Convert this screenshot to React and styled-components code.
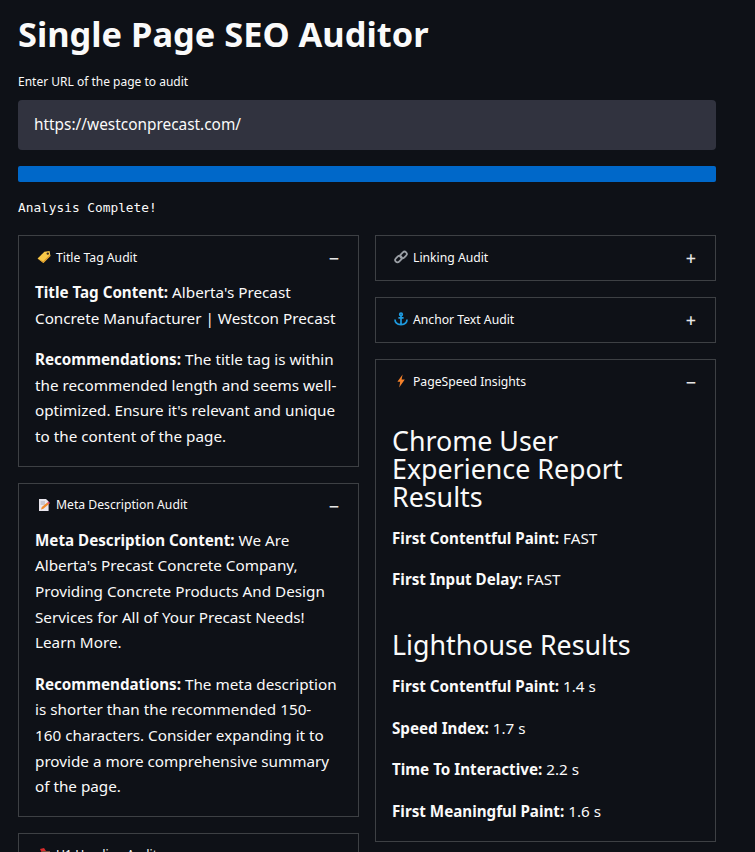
import styled, { createGlobalStyle } from "styled-components"

const GlobalStyle = createGlobalStyle`
    html, body {
        margin: 0;
        height: 852px;
        overflow: hidden;
        background-color: #0E1117;
    }

    * {
        box-sizing: border-box;
    }
`

function TagIcon() {
    return (
        <svg width="14" height="14" viewBox="0 0 14 14">
            <path d="M0.6 8.4 7.4 1.8 12.6 1 13.4 6 6.4 13Z" fill="#F7C948" />
            <path d="M0.6 8.4 6.4 13 13.4 6 13 4.8 6.2 11.2Z" fill="#D9992B" />
            <circle cx="10.8" cy="3.6" r="1.2" fill="#3B2A20" />
        </svg>
    )
}

function LinkIcon() {
    return (
        <svg width="14" height="14" viewBox="0 0 14 14" fill="none" stroke="#9A9FA5" strokeWidth="1.8">
            <rect x="0.8" y="6.8" width="7.4" height="4.6" rx="2.3" transform="rotate(-45 4.5 9.1)" />
            <rect x="5.8" y="2.6" width="7.4" height="4.6" rx="2.3" transform="rotate(-45 9.5 4.9)" />
        </svg>
    )
}

function AnchorIcon() {
    return (
        <svg width="14" height="14" viewBox="0 0 14 14" fill="none" stroke="#1E9BE0" strokeWidth="1.7">
            <circle cx="7" cy="2.4" r="1.3" />
            <path d="M7 3.6V12.6M4.4 5.8H9.6M1 7.4C1 10.6 3.6 12.4 7 12.6 10.4 12.4 13 10.6 13 7.4" />
        </svg>
    )
}

function BoltIcon() {
    return (
        <svg width="14" height="14" viewBox="0 0 14 14">
            <path d="M8.6 0.4 3.4 7.8H6.2L5.2 13.6 10.8 5.6H7.6Z" fill="#F4812A" />
        </svg>
    )
}

function MemoIcon() {
    return (
        <svg width="14" height="14" viewBox="0 0 14 14">
            <path d="M2 1H9L11.6 3.4V13H2Z" fill="#E9E6EE" />
            <path d="M3.6 4H8M3.6 6H8" stroke="#A8A6B4" strokeWidth="1" />
            <path d="M4 11.4 4.8 9 10.4 4.4 12 6 6.4 10.8Z" fill="#F08A2C" />
            <path d="M10.4 4.4 11.4 3.4 13 5 12 6Z" fill="#E8467C" />
        </svg>
    )
}

function PinIcon() {
    return (
        <svg width="14" height="14" viewBox="0 0 14 14">
            <path d="M3 1 7 0 9 3 5 5Z" fill="#D92B2B" />
            <path d="M5 3H13V5H5Z" fill="#7A5140" />
        </svg>
    )
}

function Expander({ icon, title, open, children }) {
    return (
        <ExpanderBox>
            <ExpanderHeader>
                <ExpanderTitle>
                    {icon}
                    <span>{title}</span>
                </ExpanderTitle>
                <Toggle>{open ? "−" : "+"}</Toggle>
            </ExpanderHeader>
            {children && <ExpanderBody>{children}</ExpanderBody>}
        </ExpanderBox>
    )
}

export default function App() {
    return (
        <Page>
            <GlobalStyle />
            <Title>Single Page SEO Auditor</Title>
            <Label>Enter URL of the page to audit</Label>
            <UrlField>https://westconprecast.com/</UrlField>
            <Progress />
            <Status>Analysis Complete!</Status>

            <Columns>
                <Column>
                    <Expander icon={<TagIcon />} title="Title Tag Audit" open>
                        <Text><b>Title Tag Content:</b> Alberta's Precast Concrete Manufacturer | Westcon Precast</Text>
                        <Text><b>Recommendations:</b> The title tag is within the recommended length and seems well-optimized. Ensure it's relevant and unique to the content of the page.</Text>
                    </Expander>
                    <Expander icon={<MemoIcon />} title="Meta Description Audit" open>
                        <Text><b>Meta Description Content:</b> We Are Alberta's Precast Concrete Company, Providing Concrete Products And Design Services for All of Your Precast Needs! Learn More.</Text>
                        <Text><b>Recommendations:</b> The meta description is shorter than the recommended 150-<br />160 characters. Consider expanding it to provide a more comprehensive summary of the page.</Text>
                    </Expander>
                    <Expander icon={<PinIcon />} title="H1 Heading Audit" open />
                </Column>

                <Column>
                    <Expander icon={<LinkIcon />} title="Linking Audit" />
                    <Expander icon={<AnchorIcon />} title="Anchor Text Audit" />
                    <Expander icon={<BoltIcon />} title="PageSpeed Insights" open>
                        <Heading>Chrome User Experience Report Results</Heading>
                        <Text><b>First Contentful Paint:</b> FAST</Text>
                        <Text><b>First Input Delay:</b> FAST</Text>
                        <Heading>Lighthouse Results</Heading>
                        <Text><b>First Contentful Paint:</b> 1.4 s</Text>
                        <Text><b>Speed Index:</b> 1.7 s</Text>
                        <Text><b>Time To Interactive:</b> 2.2 s</Text>
                        <Text><b>First Meaningful Paint:</b> 1.6 s</Text>
                    </Expander>
                </Column>
            </Columns>
        </Page>
    )
}

const sans = `"Noto Sans", "Open Sans", sans-serif`

const Page = styled.div`
    padding: 10px 39px 0 18px;
    color: #FAFAFA;
    font-family: ${sans};
`

const Title = styled.h1`
    margin: 0 0 15px;
    font-size: 34.4px;
    font-weight: 700;
    line-height: 48px;
    color: #FAFAFA;
`

const Label = styled.div`
    font-size: 12px;
    line-height: 18px;
    margin-bottom: 9px;
`

const UrlField = styled.div`
    height: 50px;
    display: flex;
    align-items: center;
    padding: 0 16px 2px;
    background-color: #31333F;
    border-radius: 4px;
    font-size: 15.4px;
    margin-bottom: 16px;
`

const Progress = styled.div`
    height: 16px;
    background-color: #0068C9;
    border-radius: 2px;
    margin-bottom: 16px;
`

const Status = styled.div`
    font-family: "DejaVu Sans Mono", "Liberation Mono", monospace;
    font-size: 12.8px;
    line-height: 20px;
    margin: 0 0 17px;
`

const Columns = styled.div`
    display: grid;
    grid-template-columns: 341px 341px;
    gap: 16px;
    align-items: start;
`

const Column = styled.div`
    display: flex;
    flex-direction: column;
    gap: 16px;
`

const ExpanderBox = styled.div`
    border: 1px solid #3D4044;
`

const ExpanderHeader = styled.div`
    height: 44.1px;
    display: flex;
    align-items: center;
    justify-content: space-between;
    padding: 0 15px 0 18px;
`

const ExpanderTitle = styled.div`
    display: flex;
    align-items: center;
    gap: 5px;
    padding-bottom: 2px;
    font-size: 12.2px;
`

const Toggle = styled.span`
    width: 18px;
    text-align: center;
    font-size: 18px;
    font-weight: 500;
    line-height: 18px;
    color: #E6E6E6;
`

const ExpanderBody = styled.div`
    padding: 0 16px;
`

const Text = styled.p`
    margin: 0 0 16px;
    font-size: 15.25px;
    line-height: 25.6px;

    b {
        font-size: 15.2px;
        font-weight: 700;
    }
`

const Heading = styled.h2`
    margin: 0 0 15px;
    padding-top: 22.4px;
    font-size: 26.8px;
    font-weight: 400;
    line-height: 28px;
`
